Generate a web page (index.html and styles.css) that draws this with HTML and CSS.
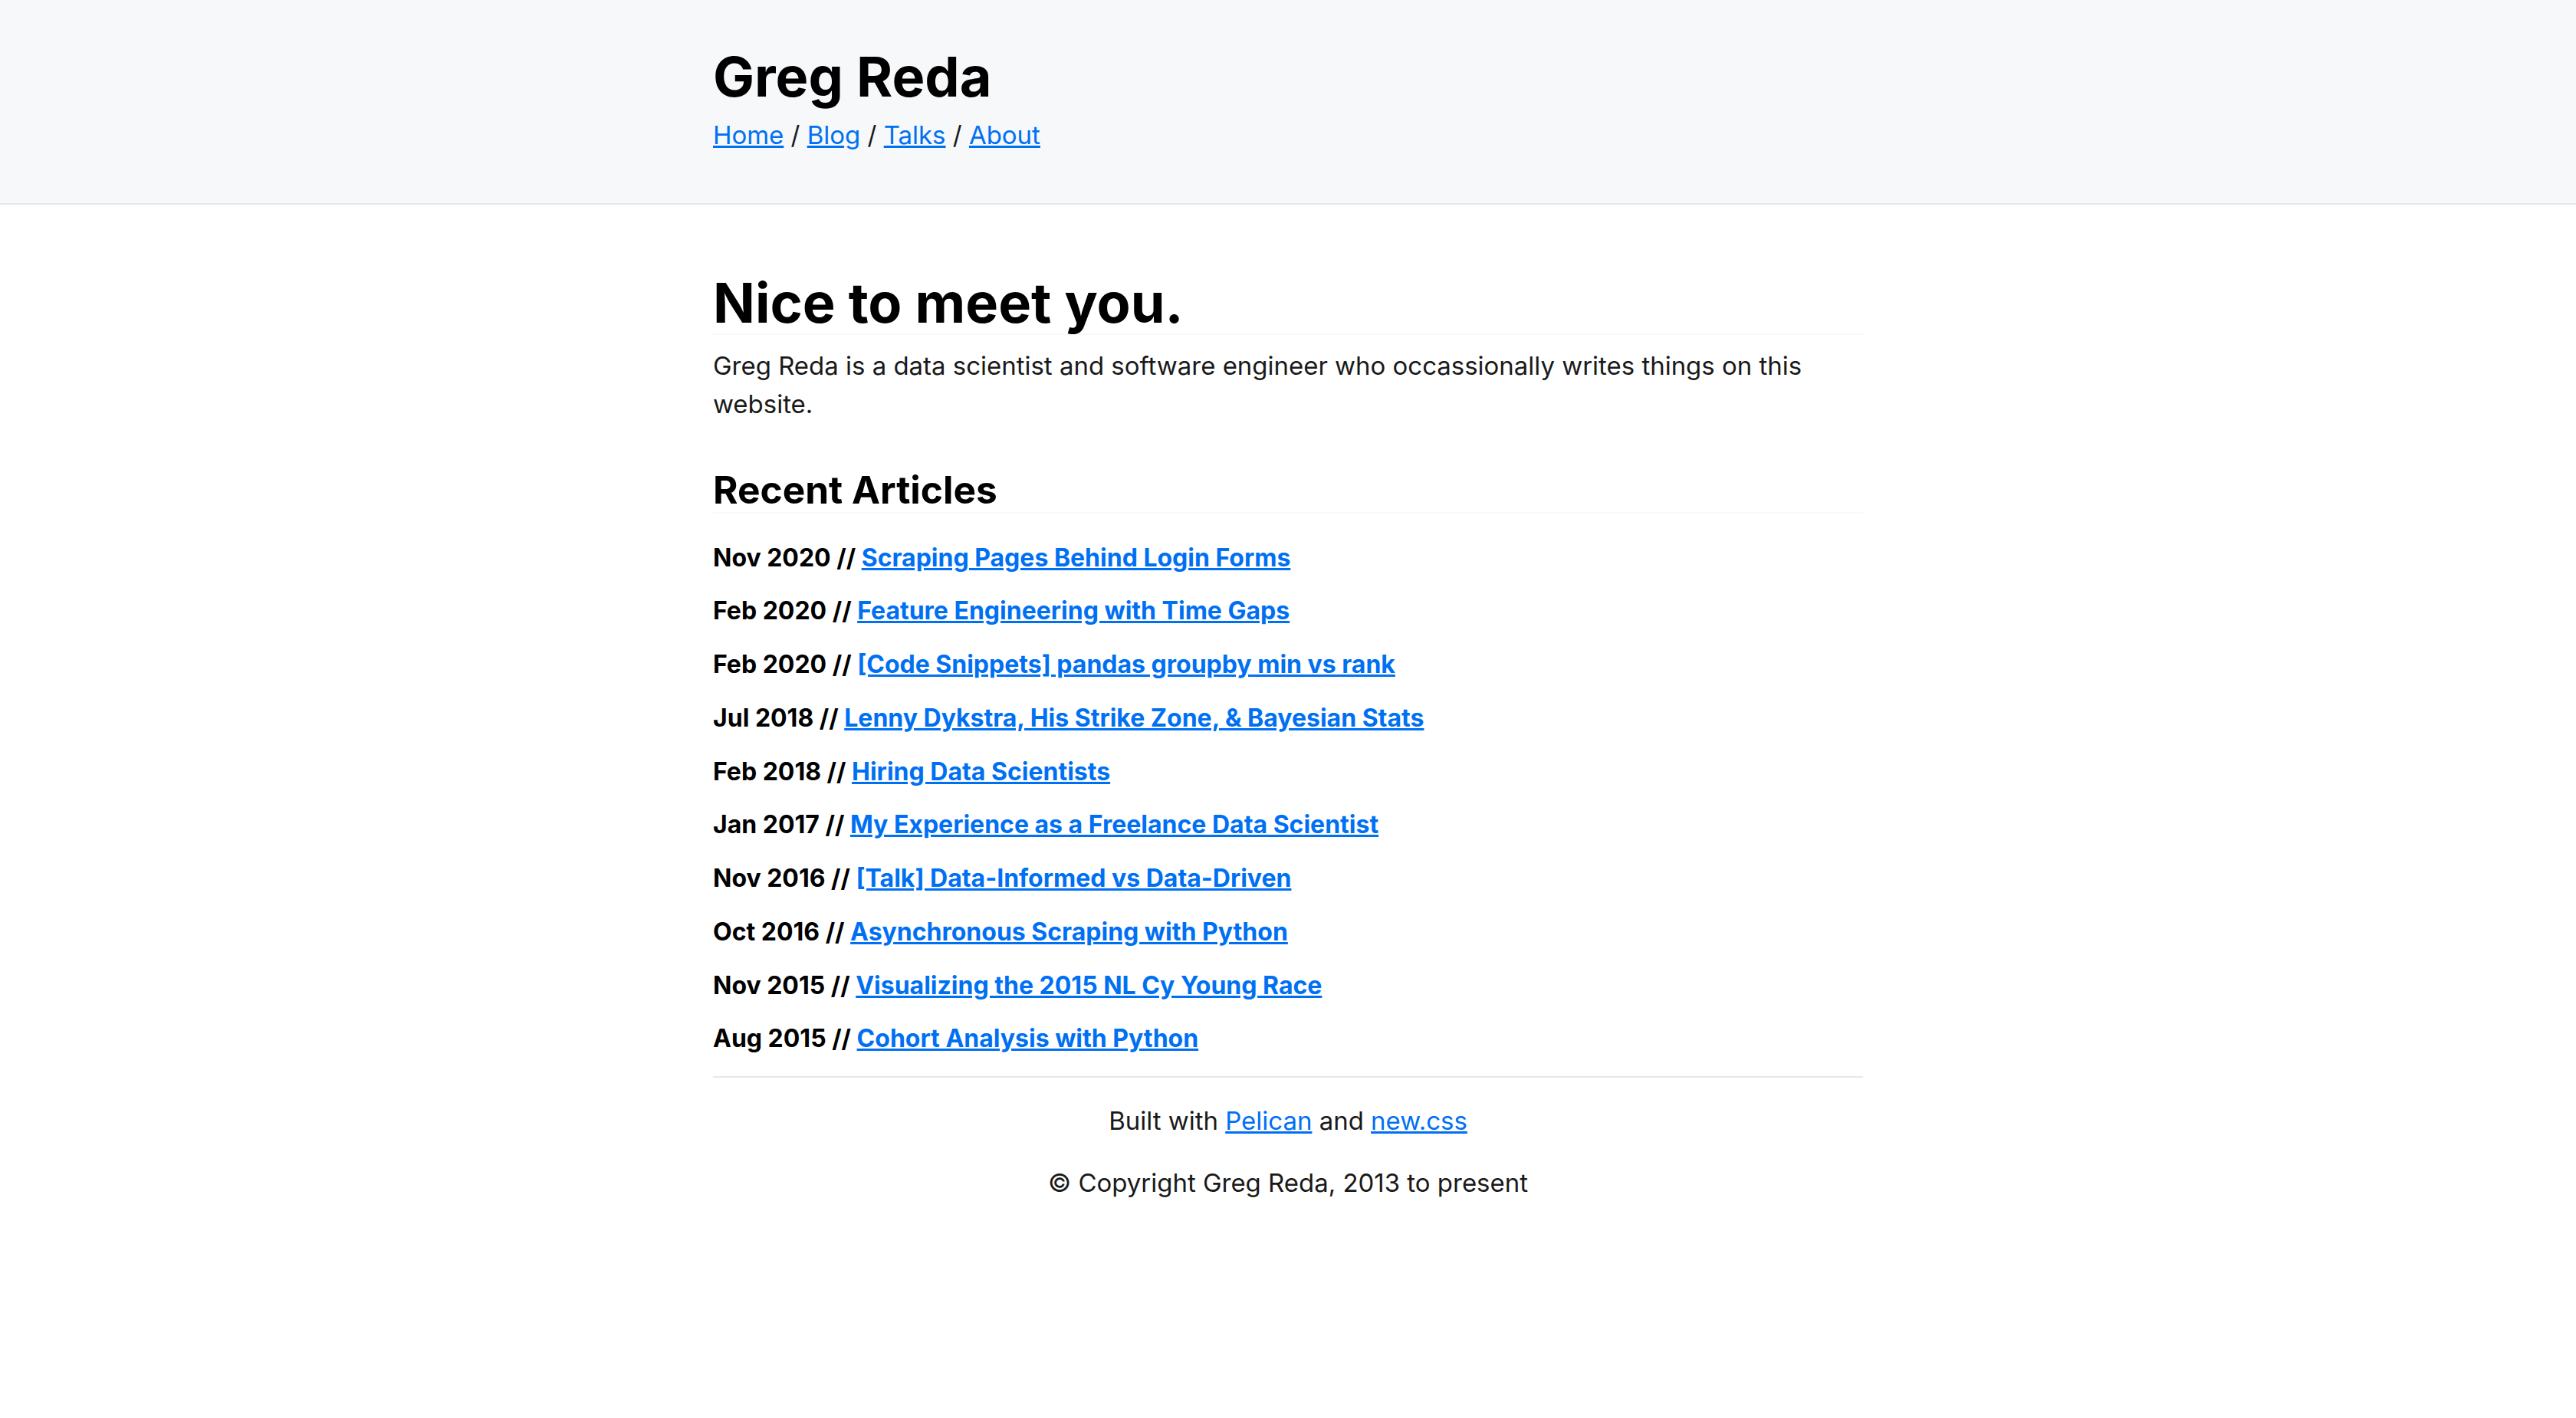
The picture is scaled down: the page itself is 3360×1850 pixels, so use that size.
FILE: index.html
```html
<!DOCTYPE html>
<html lang="en">
<head>
<meta charset="utf-8">
<title>Greg Reda</title>
<link rel="stylesheet" href="styles.css">
</head>
<body>
<header class="site-header">
  <div class="wrap">
    <h1 class="site-title">Greg Reda</h1>
    <nav class="site-nav"><a href="#">Home</a> / <a href="#">Blog</a> / <a href="#">Talks</a> / <a href="#">About</a></nav>
  </div>
</header>
<main class="wrap content">
  <h1 class="page-title">Nice to meet you.</h1>
  <p class="intro">Greg Reda is a data scientist and software engineer who occassionally writes things on this website.</p>
  <h2 class="section-title">Recent Articles</h2>
  <div class="articles">
    <div class="article">Nov 2020 // <a href="#">Scraping Pages Behind Login Forms</a></div>
    <div class="article">Feb 2020 // <a href="#">Feature Engineering with Time Gaps</a></div>
    <div class="article">Feb 2020 // <a href="#">[Code Snippets] pandas groupby min vs rank</a></div>
    <div class="article">Jul 2018 // <a href="#">Lenny Dykstra, His Strike Zone, &amp; Bayesian Stats</a></div>
    <div class="article">Feb 2018 // <a href="#">Hiring Data Scientists</a></div>
    <div class="article">Jan 2017 // <a href="#">My Experience as a Freelance Data Scientist</a></div>
    <div class="article">Nov 2016 // <a href="#">[Talk] Data-Informed vs Data-Driven</a></div>
    <div class="article">Oct 2016 // <a href="#">Asynchronous Scraping with Python</a></div>
    <div class="article">Nov 2015 // <a href="#">Visualizing the 2015 NL Cy Young Race</a></div>
    <div class="article">Aug 2015 // <a href="#">Cohort Analysis with Python</a></div>
  </div>
  <hr class="rule">
  <footer class="site-footer">
    <p>Built with <a href="#">Pelican</a> and <a href="#">new.css</a></p>
    <p>© Copyright Greg Reda, 2013 to present</p>
  </footer>
</main>
</body>
</html>
```

FILE: styles.css
```css
* {
  box-sizing: border-box;
}

html {
  background: #FFFFFF;
}

body {
  margin: 0;
  padding: 0 0 64px;
  font-family: "Inter", "Noto Sans", sans-serif;
  font-size: 32.96px;
  line-height: 1.5;
  color: #1A1A1A;
  background: #FFFFFF;
}

a {
  color: #0070F3;
}

.wrap {
  width: 1500px;
  margin: 0 auto;
}

.site-header {
  background: #F6F8FA;
  border-bottom: 2px solid #E5E7EB;
  padding: 64px 0;
}

.site-title {
  margin: 0 0 16px;
  padding: 0;
  font-size: 72px;
  line-height: 1;
  font-weight: 700;
  color: #000000;
}

.site-nav {
  display: block;
}

.content {
  margin-top: 64px;
}

.page-title {
  margin: 0 0 16px;
  padding: 28px 0 4px;
  font-size: 72px;
  line-height: 1;
  font-weight: 700;
  color: #000000;
  border-bottom: 2px solid #F6F8FA;
}

.intro {
  margin: 0;
}

.section-title {
  margin: 34.4px 0 0;
  padding: 28px 0 4px;
  font-size: 49.6px;
  line-height: 1;
  font-weight: 700;
  color: #000000;
  border-bottom: 2px solid #F6F8FA;
}

.articles {
  display: flex;
  flex-direction: column;
  gap: 20.3px;
  margin: 32.4px 0 24px;
}

.article {
  font-size: 32px;
  line-height: 49.44px;
  font-weight: 700;
  color: #000000;
}

.rule {
  border: none;
  border-top: 2px solid #E5E7EB;
  margin: 0;
}

.site-footer {
  text-align: center;
  padding-top: 32px;
}

.site-footer p {
  margin: 0 0 32px;
}
```
